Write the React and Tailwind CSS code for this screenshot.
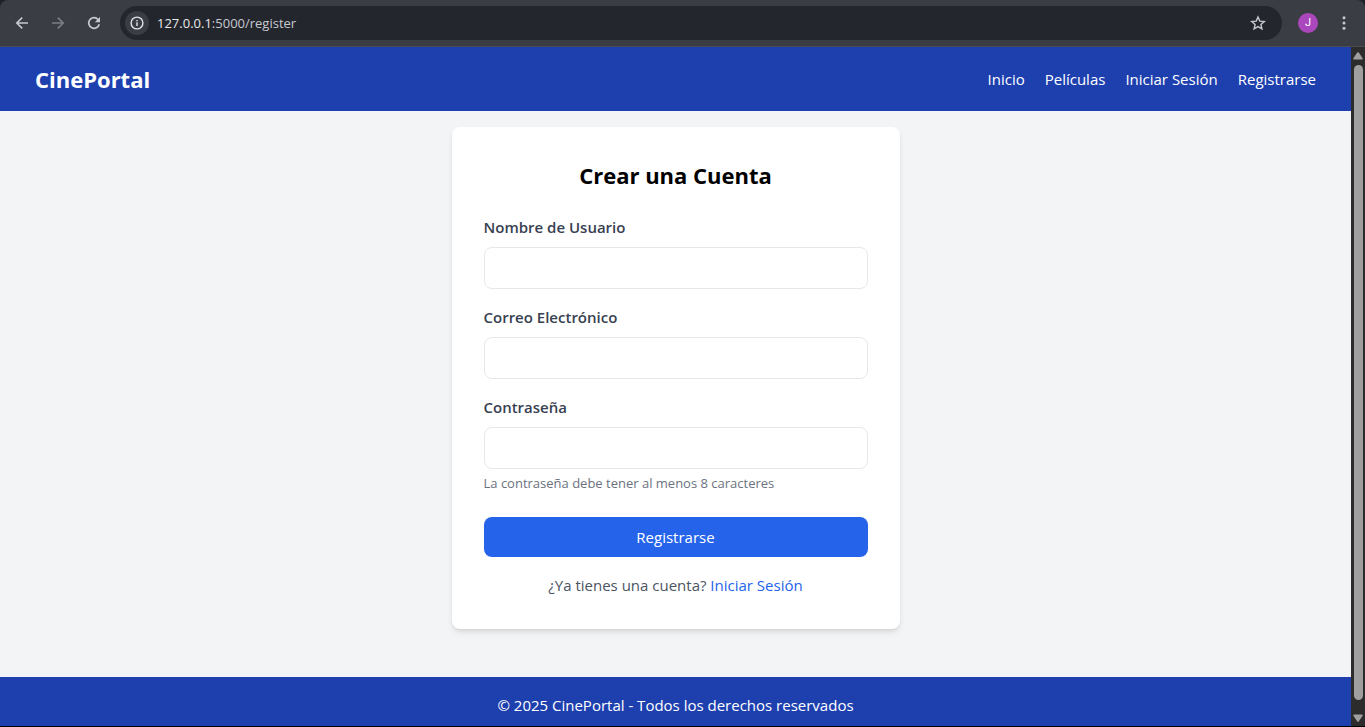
import React from "react";

const navLinks = ["Inicio", "Películas", "Iniciar Sesión", "Registrarse"];

function BrowserBar() {
  return (
    <div className="shrink-0 bg-[#1f2128]">
      <div className="flex h-[47px] items-center rounded-t-lg border-b border-[#4a4c52] bg-[#3b3d45] pr-[11px] pl-3 text-[#c7c9cf]">
        <button type="button" aria-label="Atrás" className="flex w-5 justify-center">
          <svg width="16" height="16" viewBox="0 0 16 16" fill="none" stroke="currentColor" strokeWidth="1.6">
            <path d="M14 8H3M8.2 2.6 2.8 8l5.4 5.4" />
          </svg>
        </button>
        <button type="button" aria-label="Adelante" className="ml-4 flex w-5 justify-center text-[#7d7f86]">
          <svg width="16" height="16" viewBox="0 0 16 16" fill="none" stroke="currentColor" strokeWidth="1.6">
            <path d="M2 8h11M7.8 2.6 13.2 8l-5.4 5.4" />
          </svg>
        </button>
        <button type="button" aria-label="Recargar" className="ml-4 flex w-5 justify-center">
          <svg width="16" height="16" viewBox="0 0 16 16" fill="none" stroke="currentColor" strokeWidth="1.7">
            <path d="M13.2 9.2A5.3 5.3 0 1 1 12 4.5" />
            <path d="M14 2v5.200H8.800z" fill="currentColor" stroke="none" />
          </svg>
        </button>
        <div className="ml-4 flex h-[34px] flex-1 items-center rounded-full bg-[#24262e] pr-4 pl-[5px]">
          <button type="button" aria-label="Información del sitio" className="flex size-6 items-center justify-center rounded-full bg-[#3b3d45] text-[#e3e4e8]">
            <svg width="14" height="14" viewBox="0 0 14 14" fill="none" stroke="currentColor" strokeWidth="1.4">
              <circle cx="7" cy="7" r="5.9" />
              <path d="M7 6.3v3.700M7 3.900v1.400" />
            </svg>
          </button>
          <p className="ml-2 flex-1 pt-px font-['Open_Sans',sans-serif] text-[13px] text-[#c7c9cf]">
            <span className="text-[#e8e9ec]">127.0.0.1</span>:5000/register
          </p>
          <button type="button" aria-label="Añadir a marcadores">
            <svg width="16" height="16" viewBox="0 0 16 16" fill="none" stroke="currentColor" strokeWidth="1.4">
              <path d="M8 2 9.800 6.100l4.500.4-3.400 3 1 4.400L8 11.600l-3.900 2.300 1-4.400-3.400-3 4.500-.4z" />
            </svg>
          </button>
        </div>
        <button type="button" aria-label="Perfil" className="ml-4 flex size-5 items-center justify-center rounded-full bg-[#ab47bc] font-['Roboto',sans-serif] text-[11px] text-white">
          J
        </button>
        <button type="button" aria-label="Menú" className="ml-4 flex w-5 justify-center">
          <svg width="4" height="16" viewBox="0 0 4 16" fill="currentColor">
            <circle cx="2" cy="2.700" r="1.500" />
            <circle cx="2" cy="8" r="1.500" />
            <circle cx="2" cy="13.300" r="1.500" />
          </svg>
        </button>
      </div>
    </div>
  );
}

function ScrollBar() {
  return (
    <div aria-hidden="true" className="flex w-3.5 shrink-0 flex-col items-center bg-[#2c2c2c] pt-[5px] pb-1 text-[#9f9f9f]">
      <svg width="10" height="8" viewBox="0 0 10 8" fill="currentColor">
        <path d="M4.200.6Q5-.2 5.800.6L9.600 6.200Q10 7.500 9 7.500H1Q0 7.500.4 6.200z" />
      </svg>
      <div className="mt-[5px] mb-3.5 w-[9px] flex-1 rounded-full bg-[#9f9f9f]" />
      <svg width="10" height="8" viewBox="0 0 10 8" fill="currentColor">
        <path d="M4.200 7.400Q5 8.200 5.800 7.400L9.600 1.800Q10 .5 9 .5H1Q0 .5.4 1.800z" />
      </svg>
    </div>
  );
}

function Field({ id, label, type, hint }) {
  return (
    <div>
      <label htmlFor={id} className="mb-2 block font-semibold text-[#374151]">
        {label}
      </label>
      <input
        id={id}
        type={type}
        className="block h-[42px] w-full rounded-lg border border-[#e5e7eb] bg-white px-3 outline-none focus:border-[#2563eb]"
      />
      {hint && <p className="mt-1 text-[13px] leading-5 text-[#6b7280]">{hint}</p>}
    </div>
  );
}

export default function App() {
  return (
    <div className="flex h-screen flex-col overflow-hidden border-b border-black">
      <BrowserBar />
      <div className="flex min-h-0 flex-1">
        <div className="min-w-0 flex-1 overflow-hidden bg-[#f3f4f6] font-['Open_Sans',sans-serif] text-[15px] leading-6">
          <nav className="flex h-16 items-center justify-between bg-[#1e40af] px-[35px] text-white">
            <a href="#" className="text-[22px] leading-8 font-bold">
              CinePortal
            </a>
            <div className="flex gap-5">
              {navLinks.map((name) => (
                <a key={name} href="#">
                  {name}
                </a>
              ))}
            </div>
          </nav>
          <main className="px-4 pt-4 pb-12">
            <div className="mx-auto max-w-md rounded-lg bg-white p-8 shadow-md">
              <h1 className="mb-6 text-center text-[22px] leading-8 font-bold text-black">Crear una Cuenta</h1>
              <form className="flex flex-col gap-4">
                <Field id="username" label="Nombre de Usuario" type="text" />
                <Field id="email" label="Correo Electrónico" type="email" />
                <Field id="password" label="Contraseña" type="password" hint="La contraseña debe tener al menos 8 caracteres" />
                <button type="button" className="mt-2 h-10 w-full rounded-lg bg-[#2563eb] text-white">
                  Registrarse
                </button>
              </form>
              <p className="mt-4 text-center text-[#4b5563]">
                ¿Ya tienes una cuenta?{" "}
                <a href="#" className="text-[#2563eb]">
                  Iniciar Sesión
                </a>
              </p>
            </div>
          </main>
          <footer className="bg-[#1e40af] py-4 text-center text-white">
            © 2025 CinePortal - Todos los derechos reservados
          </footer>
        </div>
        <ScrollBar />
      </div>
    </div>
  );
}
